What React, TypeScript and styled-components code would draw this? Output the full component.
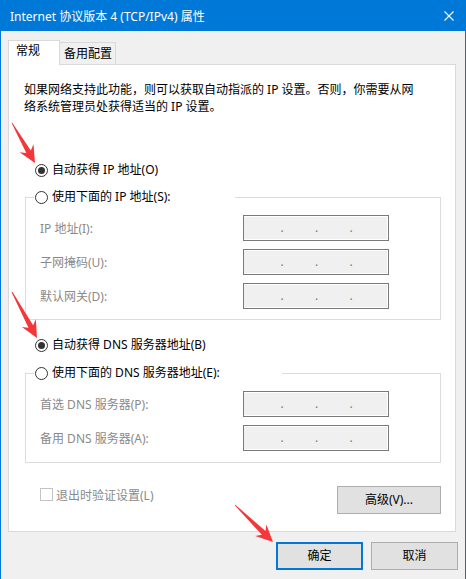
import React from 'react';
import styled, { createGlobalStyle } from 'styled-components';

const GlobalStyle = createGlobalStyle`
  html, body {
    margin: 0;
    padding: 0;
    background: #ffffff;
  }
  body {
    font-family: "Noto Sans", "Noto Sans CJK SC", sans-serif;
    font-size: 12px;
    color: #000000;
  }
`;

const Window = styled.div`
  position: relative;
  width: 466px;
  height: 579px;
  box-sizing: border-box;
  border-left: 1px solid #0078d7;
  border-right: 1px solid #0078d7;
  background: #f0f0f0;
  display: flex;
  flex-direction: column;
  overflow: hidden;
`;

const TitleBar = styled.div`
  height: 31px;
  flex-shrink: 0;
  background: #0078d7;
  color: #ffffff;
  display: flex;
  align-items: center;
  justify-content: space-between;
  padding: 0 11px 0 9px;
  font-size: 12px;
  white-space: nowrap;
`;

const Content = styled.div`
  padding: 9px 7px 0 7px;
  display: flex;
  flex-direction: column;
`;

const Tabs = styled.div`
  display: flex;
  align-items: flex-end;
  height: 24px;
`;

const Tab = styled.div<{ $active?: boolean }>`
  box-sizing: border-box;
  position: relative;
  z-index: ${p => (p.$active ? 2 : 1)};
  width: ${p => (p.$active ? 52 : 56)}px;
  height: ${p => (p.$active ? 25 : 22)}px;
  margin-bottom: ${p => (p.$active ? -1 : 0)}px;
  border: 1px solid #d9d9d9;
  border-bottom: none;
  border-left: ${p => (p.$active ? '1px solid #d9d9d9' : 'none')};
  background: ${p => (p.$active ? '#ffffff' : '#f0f0f0')};
  padding-left: ${p => (p.$active ? 7 : 4)}px;
  line-height: ${p => (p.$active ? 20 : 21)}px;
  white-space: nowrap;
`;

const Panel = styled.div`
  margin-right: 2px;
  background: #ffffff;
  border: 1px solid #d9d9d9;
  display: flex;
  flex-direction: column;
  padding-bottom: 17px;
`;

const Description = styled.p`
  margin: 0;
  padding: 16px 15px 0 15px;
  line-height: 17px;
  white-space: nowrap;
`;

const RadioRow = styled.label<{ $top?: number }>`
  display: flex;
  align-items: center;
  gap: 4px;
  height: 16px;
  margin: ${p => p.$top ?? 0}px 0 0 26px;
  line-height: 16px;
  white-space: nowrap;
`;

const RadioCircle = styled.span<{ $checked?: boolean }>`
  box-sizing: border-box;
  width: 13px;
  height: 13px;
  border: 1px solid #333333;
  border-radius: 50%;
  background: #ffffff;
  display: flex;
  align-items: center;
  justify-content: center;
  flex-shrink: 0;

  &::after {
    content: '';
    display: ${p => (p.$checked ? 'block' : 'none')};
    width: 7px;
    height: 7px;
    border-radius: 50%;
    background: #333333;
  }
`;

const GroupBox = styled.fieldset<{ $top: number; $bottom: number }>`
  margin: ${p => p.$top}px 14px 0 16px;
  padding: 0;
  min-width: 0;
  border: 1px solid #dcdcdc;
  padding-bottom: ${p => p.$bottom}px;
`;

const GroupLegend = styled.legend<{ $width: number }>`
  box-sizing: border-box;
  width: ${p => p.$width}px;
  height: 16px;
  margin-left: 8px;
  padding: 0 0 0 1px;
  display: flex;
  align-items: center;
  gap: 4px;
  line-height: 16px;
  white-space: nowrap;
`;

const FieldGrid = styled.div`
  display: grid;
  grid-template-columns: 1fr 146px;
  row-gap: 8px;
  align-items: center;
  padding: 10px 51px 0 14px;
`;

const FieldLabel = styled.span`
  color: #8a8a8a;
  white-space: nowrap;
`;

const IpBox = styled.div`
  box-sizing: border-box;
  height: 26px;
  border: 1px solid #7a7a7a;
  background: #f0f0f0;
  box-shadow: inset -1px -1px 0 #ffffff, inset 0 1px 0 #ffffff;
  display: flex;
  align-items: center;
  padding: 0 4px 0 5px;
`;

const IpSegment = styled.span`
  flex: 1;
`;

const IpDot = styled.span`
  width: 3px;
  text-align: center;
  color: #7a7a7a;
  line-height: 16px;
`;

const OptionsRow = styled.div`
  display: flex;
  align-items: flex-start;
  justify-content: space-between;
  margin: 23px 14px 0 31px;
`;

const CheckRow = styled.label`
  display: flex;
  align-items: center;
  gap: 3px;
  margin-top: 1px;
  height: 15px;
  color: #8a8a8a;
  white-space: nowrap;
`;

const CheckBox = styled.span`
  box-sizing: border-box;
  width: 13px;
  height: 13px;
  border: 1px solid #c4c4c4;
  background: #ffffff;
`;

const Button = styled.button<{ $width: number; $default?: boolean }>`
  box-sizing: border-box;
  width: ${p => p.$width}px;
  height: 28px;
  padding: 0;
  background: #e1e1e1;
  border: ${p => (p.$default ? '2px solid #0078d7' : '1px solid #adadad')};
  font-family: inherit;
  font-size: 12px;
  color: #000000;
  line-height: 16px;
`;

const Footer = styled.div`
  display: flex;
  justify-content: flex-end;
  gap: 8px;
  margin-top: 10px;
`;

const Overlay = styled.svg`
  position: absolute;
  left: -1px;
  top: 0;
  pointer-events: none;
`;

const IpField = () => (
  <IpBox>
    <IpSegment />
    <IpDot>.</IpDot>
    <IpSegment />
    <IpDot>.</IpDot>
    <IpSegment />
    <IpDot>.</IpDot>
    <IpSegment />
  </IpBox>
);

const CloseIcon = () => (
  <svg width="10" height="10" viewBox="0 0 10 10">
    <path d="M0.5 0.5 L9.5 9.5 M9.5 0.5 L0.5 9.5" stroke="#ffffff" strokeWidth="1.1" fill="none" />
  </svg>
);

// tail -> tip, tapered shaft with a triangular head
const arrowPoints = (x1: number, y1: number, x2: number, y2: number) => {
  const dx = x2 - x1;
  const dy = y2 - y1;
  const len = Math.hypot(dx, dy);
  const ux = dx / len;
  const uy = dy / len;
  const px = -uy;
  const py = ux;
  const at = (d: number, w: number) =>
    `${(x1 + ux * d + px * w).toFixed(1)},${(y1 + uy * d + py * w).toFixed(1)}`;
  return [
    at(0, 0.4),
    at(len - 13, 2.6),
    at(len - 17, 8),
    at(len, 0),
    at(len - 17, -8),
    at(len - 13, -2.6),
    at(0, -0.4),
  ].join(' ');
};

const arrows = [
  [12, 123, 35, 163],
  [12, 292, 37, 338],
  [235, 505, 273, 542],
];

export default function App() {
  return (
    <>
      <GlobalStyle />
      <Window>
        <TitleBar>
          <span>Internet 协议版本 4 (TCP/IPv4) 属性</span>
          <CloseIcon />
        </TitleBar>

        <Content>
          <Tabs>
            <Tab $active>常规</Tab>
            <Tab>备用配置</Tab>
          </Tabs>

          <Panel>
            <Description>
              如果网络支持此功能，则可以获取自动指派的 IP 设置。否则，你需要从网
              <br />
              络系统管理员处获得适当的 IP 设置。
            </Description>

            <RadioRow $top={47}>
              <RadioCircle $checked />
              自动获得 IP 地址(O)
            </RadioRow>

            <GroupBox $top={11} $bottom={10}>
              <GroupLegend $width={201}>
                <RadioCircle />
                使用下面的 IP 地址(S):
              </GroupLegend>
              <FieldGrid>
                <FieldLabel>IP 地址(I):</FieldLabel>
                <IpField />
                <FieldLabel>子网掩码(U):</FieldLabel>
                <IpField />
                <FieldLabel>默认网关(D):</FieldLabel>
                <IpField />
              </FieldGrid>
            </GroupBox>

            <RadioRow $top={17}>
              <RadioCircle $checked />
              自动获得 DNS 服务器地址(B)
            </RadioRow>

            <GroupBox $top={12} $bottom={11}>
              <GroupLegend $width={248}>
                <RadioCircle />
                使用下面的 DNS 服务器地址(E):
              </GroupLegend>
              <FieldGrid>
                <FieldLabel>首选 DNS 服务器(P):</FieldLabel>
                <IpField />
                <FieldLabel>备用 DNS 服务器(A):</FieldLabel>
                <IpField />
              </FieldGrid>
            </GroupBox>

            <OptionsRow>
              <CheckRow>
                <CheckBox />
                退出时验证设置(L)
              </CheckRow>
              <Button $width={104}>高级(V)...</Button>
            </OptionsRow>
          </Panel>

          <Footer>
            <Button $width={87} $default>确定</Button>
            <Button $width={87}>取消</Button>
          </Footer>
        </Content>

        <Overlay width="466" height="579" viewBox="0 0 466 579">
          {arrows.map(([x1, y1, x2, y2], i) => (
            <polygon key={i} points={arrowPoints(x1, y1, x2, y2)} fill="#f2383b" />
          ))}
        </Overlay>
      </Window>
    </>
  );
}
